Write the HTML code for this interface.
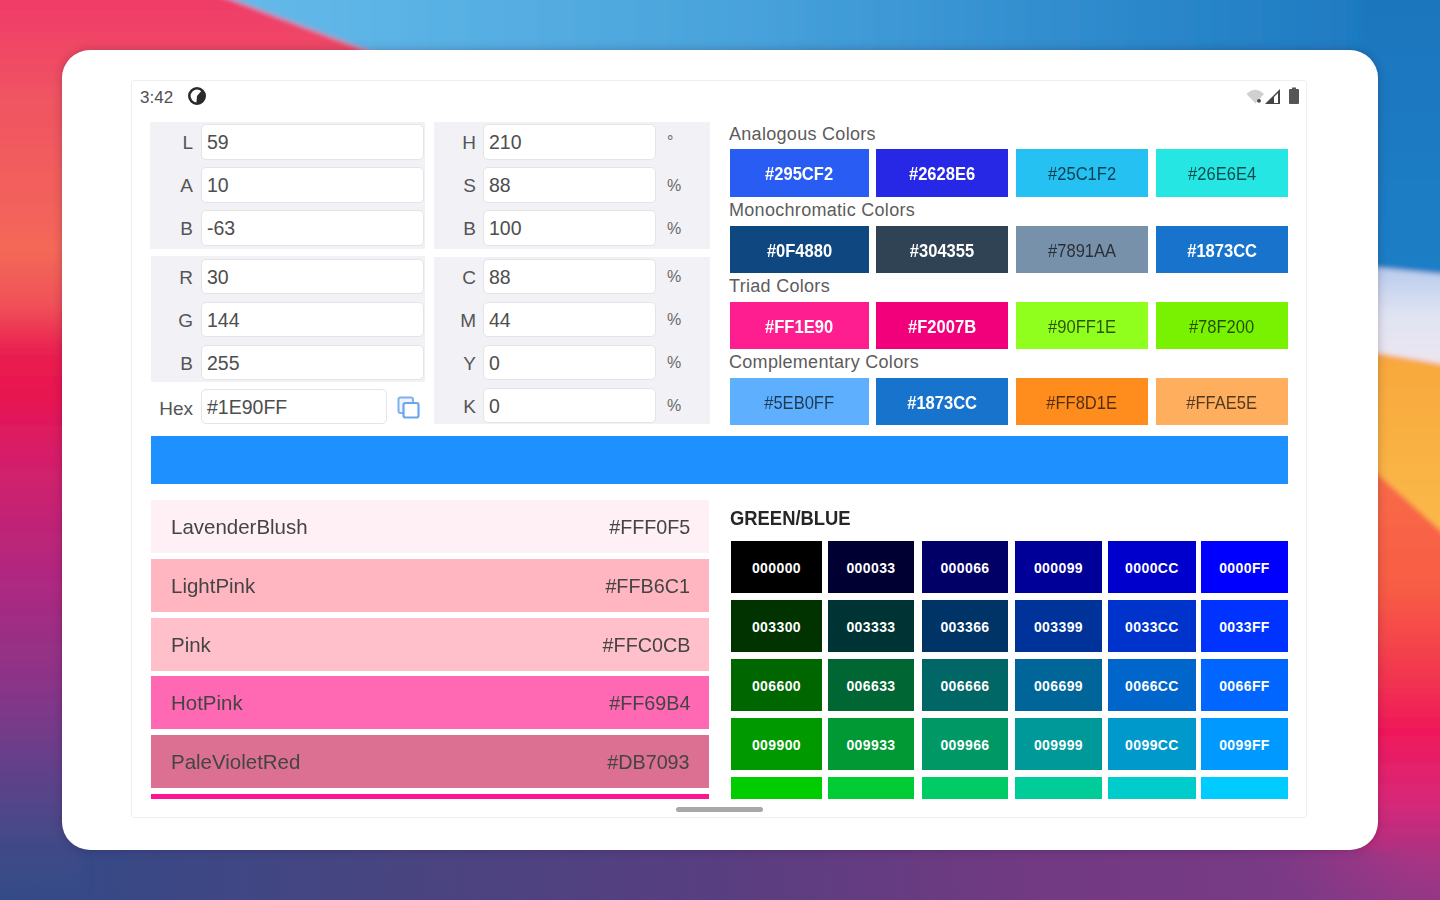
<!DOCTYPE html>
<html><head><meta charset="utf-8">
<style>
*{margin:0;padding:0;box-sizing:border-box}
html,body{width:1440px;height:900px;overflow:hidden}
body{position:relative;font-family:"Liberation Sans",sans-serif;background:#5a3e80}
.a{position:absolute}
#bg{position:absolute;left:0;top:0;width:1440px;height:900px}
#frame{position:absolute;left:62px;top:50px;width:1316px;height:800px;background:#fff;border-radius:28px;box-shadow:0 0 10px rgba(40,0,40,.25)}
#screen{position:absolute;left:131px;top:80px;width:1176px;height:738px;border:1px solid #efefef;border-radius:3px;background:#fff}
.panel{position:absolute;background:#f1f1f6}
.inp{position:absolute;background:#fff;border:1.5px solid #e4e4e8;border-radius:5px;font-size:19.5px;color:#4e4e4e;padding-left:5px;line-height:35px}
.lbl{position:absolute;font-size:19px;color:#555;text-align:right;line-height:37px}
.unit{position:absolute;font-size:16px;color:#6a6a6a;line-height:35px}
.ttl{position:absolute;font-size:18px;color:#5c5c5c;line-height:20px;white-space:nowrap;letter-spacing:0.3px}
.sw{position:absolute;height:47.5px;font-size:19px;font-weight:bold;color:#fff;text-align:center;line-height:50px}
.sw span{display:inline-block;transform:scaleX(0.87)}
.sw.d{color:rgba(0,0,0,.68);font-weight:normal}
.li{position:absolute;left:151px;width:558px;height:53px;font-size:21px;color:#444;line-height:54px}
.li span{position:absolute;left:20px;transform:scaleX(.975);transform-origin:0 50%}
.li b{position:absolute;right:19px;font-weight:normal;transform:scaleX(.94);transform-origin:100% 50%}
.gc{position:absolute;height:52px;font-size:14px;font-weight:bold;color:#fff;text-align:center;line-height:55px;letter-spacing:0.4px}
</style></head><body>
<svg id="bg" width="1440" height="900" viewBox="0 0 1440 900">
<defs>
<linearGradient id="gL" gradientUnits="userSpaceOnUse" x1="0" y1="0" x2="0" y2="900">
<stop offset="0" stop-color="#f03c68"/>
<stop offset="0.11" stop-color="#f05462"/>
<stop offset="0.28" stop-color="#f46858"/>
<stop offset="0.34" stop-color="#f05058"/>
<stop offset="0.39" stop-color="#ea2050"/>
<stop offset="0.44" stop-color="#e81450"/>
<stop offset="0.5" stop-color="#d81e68"/>
<stop offset="0.64" stop-color="#b02880"/>
<stop offset="0.76" stop-color="#8a3488"/>
<stop offset="0.85" stop-color="#64408a"/>
<stop offset="0.94" stop-color="#404a88"/>
<stop offset="1" stop-color="#344c88"/>
</linearGradient>
<linearGradient id="gT" gradientUnits="userSpaceOnUse" x1="233" y1="0" x2="1440" y2="0">
<stop offset="0" stop-color="#64bae9"/>
<stop offset="0.4" stop-color="#4aa4dc"/>
<stop offset="0.72" stop-color="#2e8acc"/>
<stop offset="1" stop-color="#1a76be"/>
</linearGradient>
<linearGradient id="gB" gradientUnits="userSpaceOnUse" x1="0" y1="900" x2="1440" y2="840">
<stop offset="0" stop-color="#324a88"/>
<stop offset="0.3" stop-color="#4a4480"/>
<stop offset="0.5" stop-color="#583e80"/>
<stop offset="0.7" stop-color="#703a82"/>
<stop offset="1" stop-color="#7e3a88"/>
</linearGradient>
<radialGradient id="gBr" gradientUnits="userSpaceOnUse" cx="1440" cy="780" r="200" fx="1440" fy="780">
<stop offset="0" stop-color="#d03080" stop-opacity="1"/>
<stop offset="0.35" stop-color="#b83282" stop-opacity="0.85"/>
<stop offset="1" stop-color="#8e3888" stop-opacity="0"/>
</radialGradient>
<linearGradient id="gRb" gradientUnits="userSpaceOnUse" x1="0" y1="0" x2="0" y2="272">
<stop offset="0" stop-color="#1a76be"/>
<stop offset="1" stop-color="#1e7ec6"/>
</linearGradient>
<linearGradient id="gRw" gradientUnits="userSpaceOnUse" x1="0" y1="268" x2="0" y2="360">
<stop offset="0" stop-color="#b8ccec"/>
<stop offset="0.5" stop-color="#dfe3f3"/>
<stop offset="1" stop-color="#eae6f0"/>
</linearGradient>
<linearGradient id="gRo" gradientUnits="userSpaceOnUse" x1="0" y1="352" x2="0" y2="520">
<stop offset="0" stop-color="#f8a83c"/>
<stop offset="1" stop-color="#fab848"/>
</linearGradient>
<linearGradient id="gRr" gradientUnits="userSpaceOnUse" x1="0" y1="470" x2="0" y2="850">
<stop offset="0" stop-color="#f86c48"/>
<stop offset="0.316" stop-color="#f85c44"/>
<stop offset="0.553" stop-color="#f23450"/>
<stop offset="0.684" stop-color="#f0185a"/>
<stop offset="0.868" stop-color="#d82878"/>
<stop offset="1" stop-color="#b03080"/>
</linearGradient>
<linearGradient id="gTr" gradientUnits="userSpaceOnUse" x1="0" y1="0" x2="400" y2="0">
<stop offset="0" stop-color="#ee4470"/>
<stop offset="1" stop-color="#f03a66"/>
</linearGradient>
</defs>
<filter id="bl" x="-20%" y="-20%" width="140%" height="140%"><feGaussianBlur stdDeviation="6"/></filter>
<filter id="bl2" x="-20%" y="-20%" width="140%" height="140%"><feGaussianBlur stdDeviation="2.5"/></filter>
<rect x="0" y="0" width="1440" height="900" fill="url(#gB)"/>
<rect x="1000" y="700" width="440" height="200" fill="url(#gBr)"/>
<g filter="url(#bl)">
<rect x="-20" y="60" width="100" height="830" fill="url(#gL)"/>
</g>
<g filter="url(#bl2)">
<rect x="-20" y="-20" width="1480" height="90" fill="url(#gT)"/>
<polygon points="-20,-20 180,-20 418,70 -20,70" fill="url(#gL)"/>
</g>
<g filter="url(#bl2)">
<rect x="1360" y="-20" width="100" height="295" fill="url(#gRb)"/>
<polygon points="1360,266 1460,276 1460,850 1360,850" fill="url(#gRw)"/>
<polygon points="1360,350 1460,367 1460,850 1360,850" fill="url(#gRo)"/>
<polygon points="1360,458 1460,548 1460,850 1360,850" fill="url(#gRr)"/>
</g>
</svg>
<div id="frame"></div>
<div id="screen"></div>

<!-- status bar -->
<div class="a" style="left:140px;top:88px;font-size:17px;color:#505050;line-height:20px">3:42</div>
<svg class="a" style="left:188px;top:87px" width="18" height="18" viewBox="0 0 18 18"><circle cx="9" cy="9" r="7.7" fill="none" stroke="#2a2a2a" stroke-width="2.6"/><path d="M9 9 L13.50 3.64 A7 7 0 0 1 8.39 15.97 Z" fill="#2a2a2a"/></svg>
<svg class="a" style="left:1244px;top:86px" width="58" height="20" viewBox="0 0 58 20">
<path d="M2.5 8 Q11 -0.5 20 8 L11.5 17.5 Z" fill="#d0d0d0"/><circle cx="15" cy="14.8" r="1.9" fill="#444"/>
<path d="M21 18 L36 3 L36 18 Z" fill="#444"/><path d="M30 11 L34 7 L34 17 L30 17 Z" fill="#fff"/>
<rect x="45" y="3" width="10" height="15" rx="1" fill="#555"/><rect x="48" y="1.5" width="4" height="2" fill="#555"/>
</svg>

<!-- panels -->
<div class="panel" style="left:150px;top:122px;width:275px;height:127px"></div>
<div class="panel" style="left:434px;top:122px;width:276px;height:127px"></div>
<div class="panel" style="left:151px;top:256px;width:274px;height:126px"></div>
<div class="panel" style="left:434px;top:257px;width:276px;height:167px"></div>

<!-- LAB -->
<div class="lbl" style="left:160px;top:124px;width:33px">L</div>
<div class="inp" style="left:201px;top:124px;width:223px;height:36px">59</div>
<div class="lbl" style="left:160px;top:167px;width:33px">A</div>
<div class="inp" style="left:201px;top:167px;width:223px;height:36px">10</div>
<div class="lbl" style="left:160px;top:210px;width:33px">B</div>
<div class="inp" style="left:201px;top:210px;width:223px;height:36px">-63</div>
<!-- HSB -->
<div class="lbl" style="left:440px;top:124px;width:36px">H</div>
<div class="inp" style="left:483px;top:124px;width:173px;height:36px">210</div>
<div class="unit" style="left:667px;top:124px">°</div>
<div class="lbl" style="left:440px;top:167px;width:36px">S</div>
<div class="inp" style="left:483px;top:167px;width:173px;height:36px">88</div>
<div class="unit" style="left:667px;top:168px">%</div>
<div class="lbl" style="left:440px;top:210px;width:36px">B</div>
<div class="inp" style="left:483px;top:210px;width:173px;height:36px">100</div>
<div class="unit" style="left:667px;top:211px">%</div>
<!-- RGB -->
<div class="lbl" style="left:160px;top:259px;width:33px">R</div>
<div class="inp" style="left:201px;top:259px;width:223px;height:35px">30</div>
<div class="lbl" style="left:160px;top:302px;width:33px">G</div>
<div class="inp" style="left:201px;top:302px;width:223px;height:35px">144</div>
<div class="lbl" style="left:160px;top:345px;width:33px">B</div>
<div class="inp" style="left:201px;top:345px;width:223px;height:35px">255</div>
<div class="lbl" style="left:148px;top:390px;width:45px;font-size:19px">Hex</div>
<div class="inp" style="left:201px;top:389px;width:186px;height:35px">#1E90FF</div>
<svg class="a" style="left:396px;top:395px" width="26" height="26" viewBox="0 0 26 26"><rect x="2.5" y="2.5" width="14.5" height="15.5" rx="2" fill="#eef3fd" stroke="#7fb2f0" stroke-width="2"/><rect x="7.5" y="8" width="15" height="14.5" rx="2" fill="#fff" stroke="#69a6ee" stroke-width="2.2"/></svg>
<!-- CMYK -->
<div class="lbl" style="left:440px;top:259px;width:36px">C</div>
<div class="inp" style="left:483px;top:259px;width:173px;height:35px">88</div>
<div class="unit" style="left:667px;top:259px">%</div>
<div class="lbl" style="left:440px;top:302px;width:36px">M</div>
<div class="inp" style="left:483px;top:302px;width:173px;height:35px">44</div>
<div class="unit" style="left:667px;top:302px">%</div>
<div class="lbl" style="left:440px;top:345px;width:36px">Y</div>
<div class="inp" style="left:483px;top:345px;width:173px;height:35px">0</div>
<div class="unit" style="left:667px;top:345px">%</div>
<div class="lbl" style="left:440px;top:388px;width:36px">K</div>
<div class="inp" style="left:483px;top:388px;width:173px;height:35px">0</div>
<div class="unit" style="left:667px;top:388px">%</div>

<!-- harmony swatches -->
<div class="ttl" style="left:729px;top:124px">Analogous Colors</div>
<div class="sw" style="left:730px;top:149px;width:139px;background:#295cf2"><span>#295CF2</span></div>
<div class="sw" style="left:876px;top:149px;width:132px;background:#2628e6"><span>#2628E6</span></div>
<div class="sw d" style="left:1016px;top:149px;width:132px;background:#25c1f2"><span>#25C1F2</span></div>
<div class="sw d" style="left:1156px;top:149px;width:132px;background:#26e6e4"><span>#26E6E4</span></div>
<div class="ttl" style="left:729px;top:200px">Monochromatic Colors</div>
<div class="sw" style="left:730px;top:225.5px;width:139px;background:#0f4880"><span>#0F4880</span></div>
<div class="sw" style="left:876px;top:225.5px;width:132px;background:#304355"><span>#304355</span></div>
<div class="sw d" style="left:1016px;top:225.5px;width:132px;background:#7891aa"><span>#7891AA</span></div>
<div class="sw" style="left:1156px;top:225.5px;width:132px;background:#1873cc"><span>#1873CC</span></div>
<div class="ttl" style="left:729px;top:276px">Triad Colors</div>
<div class="sw" style="left:730px;top:301.5px;width:139px;background:#ff1e90"><span>#FF1E90</span></div>
<div class="sw" style="left:876px;top:301.5px;width:132px;background:#f2007b"><span>#F2007B</span></div>
<div class="sw d" style="left:1016px;top:301.5px;width:132px;background:#90ff1e"><span>#90FF1E</span></div>
<div class="sw d" style="left:1156px;top:301.5px;width:132px;background:#78f200"><span>#78F200</span></div>
<div class="ttl" style="left:729px;top:352px">Complementary Colors</div>
<div class="sw d" style="left:730px;top:377.5px;width:139px;background:#5eb0ff"><span>#5EB0FF</span></div>
<div class="sw" style="left:876px;top:377.5px;width:132px;background:#1873cc"><span>#1873CC</span></div>
<div class="sw d" style="left:1016px;top:377.5px;width:132px;background:#ff8d1e"><span>#FF8D1E</span></div>
<div class="sw d" style="left:1156px;top:377.5px;width:132px;background:#ffae5e"><span>#FFAE5E</span></div>

<!-- blue bar -->
<div class="a" style="left:151px;top:436px;width:1137px;height:47.5px;background:#1e90ff"></div>

<!-- list -->
<div class="li" style="top:500px;background:#FFF0F5"><span>LavenderBlush</span><b>#FFF0F5</b></div>
<div class="li" style="top:559px;background:#FFB6C1"><span>LightPink</span><b>#FFB6C1</b></div>
<div class="li" style="top:618px;background:#FFC0CB"><span>Pink</span><b>#FFC0CB</b></div>
<div class="li" style="top:676px;background:#FF69B4"><span>HotPink</span><b>#FF69B4</b></div>
<div class="li" style="top:735px;background:#DB7093"><span>PaleVioletRed</span><b>#DB7093</b></div>
<div class="a" style="left:151px;top:794px;width:558px;height:5px;background:#ff1493"></div>

<!-- grid -->
<div class="ttl" style="left:730px;top:508px;font-weight:bold;color:#262626;font-size:20px;letter-spacing:0;transform:scaleX(0.92);transform-origin:0 0">GREEN/BLUE</div>
<div class="gc" style="left:731px;top:541px;width:91px;height:52px;background:#000000">000000</div>
<div class="gc" style="left:828px;top:541px;width:86px;height:52px;background:#000033">000033</div>
<div class="gc" style="left:922px;top:541px;width:86px;height:52px;background:#000066">000066</div>
<div class="gc" style="left:1015px;top:541px;width:87px;height:52px;background:#000099">000099</div>
<div class="gc" style="left:1108px;top:541px;width:88px;height:52px;background:#0000CC">0000CC</div>
<div class="gc" style="left:1201px;top:541px;width:87px;height:52px;background:#0000FF">0000FF</div>
<div class="gc" style="left:731px;top:600px;width:91px;height:52px;background:#003300">003300</div>
<div class="gc" style="left:828px;top:600px;width:86px;height:52px;background:#003333">003333</div>
<div class="gc" style="left:922px;top:600px;width:86px;height:52px;background:#003366">003366</div>
<div class="gc" style="left:1015px;top:600px;width:87px;height:52px;background:#003399">003399</div>
<div class="gc" style="left:1108px;top:600px;width:88px;height:52px;background:#0033CC">0033CC</div>
<div class="gc" style="left:1201px;top:600px;width:87px;height:52px;background:#0033FF">0033FF</div>
<div class="gc" style="left:731px;top:659px;width:91px;height:52px;background:#006600">006600</div>
<div class="gc" style="left:828px;top:659px;width:86px;height:52px;background:#006633">006633</div>
<div class="gc" style="left:922px;top:659px;width:86px;height:52px;background:#006666">006666</div>
<div class="gc" style="left:1015px;top:659px;width:87px;height:52px;background:#006699">006699</div>
<div class="gc" style="left:1108px;top:659px;width:88px;height:52px;background:#0066CC">0066CC</div>
<div class="gc" style="left:1201px;top:659px;width:87px;height:52px;background:#0066FF">0066FF</div>
<div class="gc" style="left:731px;top:718px;width:91px;height:52px;background:#009900">009900</div>
<div class="gc" style="left:828px;top:718px;width:86px;height:52px;background:#009933">009933</div>
<div class="gc" style="left:922px;top:718px;width:86px;height:52px;background:#009966">009966</div>
<div class="gc" style="left:1015px;top:718px;width:87px;height:52px;background:#009999">009999</div>
<div class="gc" style="left:1108px;top:718px;width:88px;height:52px;background:#0099CC">0099CC</div>
<div class="gc" style="left:1201px;top:718px;width:87px;height:52px;background:#0099FF">0099FF</div>
<div class="gc" style="left:731px;top:777px;width:91px;height:22px;background:#00CC00"></div>
<div class="gc" style="left:828px;top:777px;width:86px;height:22px;background:#00CC33"></div>
<div class="gc" style="left:922px;top:777px;width:86px;height:22px;background:#00CC66"></div>
<div class="gc" style="left:1015px;top:777px;width:87px;height:22px;background:#00CC99"></div>
<div class="gc" style="left:1108px;top:777px;width:88px;height:22px;background:#00CCCC"></div>
<div class="gc" style="left:1201px;top:777px;width:87px;height:22px;background:#00CCFF"></div>


<div class="a" style="left:676px;top:807px;width:87px;height:5px;border-radius:3px;background:#a8a8a8"></div>
</body></html>
